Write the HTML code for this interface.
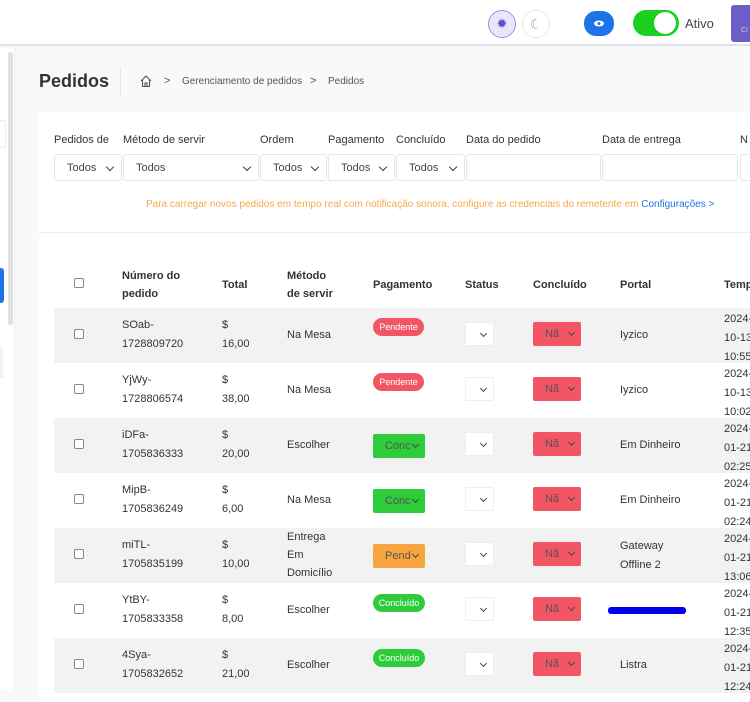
<!DOCTYPE html>
<html><head><meta charset="utf-8"><style>
*{margin:0;padding:0;box-sizing:border-box}
body{width:750px;height:690px;overflow:hidden;background:#f8f9fb;font-family:"Liberation Sans",sans-serif;color:#333;position:relative}
.a{position:absolute}
.top{left:0;top:0;width:750px;height:46px;background:#fff;border-bottom:2px solid #e2e2e4}
.side{left:0;top:48px;width:15px;height:642px;background:#fff;border-right:1px solid #eee}
.card{left:39px;top:112px;width:720px;height:590px;background:#fff}
.lbl{font-size:11px;color:#333;top:134px}
.sel{top:154px;height:27px;border:1px solid #e6e6e6;border-radius:3px;background:#fff;font-size:11px;color:#444;padding:7px 0 0 12px}
.sel:after{content:"";position:absolute;right:8px;top:9px;width:5px;height:5px;border-right:1.5px solid #444;border-bottom:1.5px solid #444;transform:rotate(45deg)}
.box{top:154px;height:27px;border:1px solid #e6e6e6;border-radius:3px;background:#fff}
.th{font-size:11px;font-weight:bold;color:#333;line-height:18px}
.row{left:54px;width:700px;height:55px}
.g{background:#f2f2f2}
.td{font-size:11px;color:#333;line-height:19px}
.dt{font-size:11px;color:#333;line-height:19px}
.cb{width:10px;height:10px;border:1px solid #888;border-radius:2px;background:#fff}
.pill{height:18px;border-radius:9px;color:#fff;font-size:9px;text-align:center;line-height:18px}
.dd{height:24px;border-radius:2px;font-size:11px;padding:6px 0 0 12px}
.dd:after{content:"";position:absolute;right:7px;top:8px;width:4px;height:4px;border-right:1.5px solid #444;border-bottom:1.5px solid #444;transform:rotate(45deg)}
</style></head><body>
<div class="a top"></div>
<div class="a" style="left:488px;top:10px;width:28px;height:28px;border-radius:50%;background:#e8e6f8;border:1px solid #9c94e0;color:#5b50c8;font-size:13px;text-align:center;line-height:26px">✹</div>
<div class="a" style="left:522px;top:10px;width:28px;height:28px;border-radius:50%;border:1px solid #e6e6ee;color:#9a9aa6;font-size:14px;text-align:center;line-height:26px">☾</div>
<div class="a" style="left:584px;top:11px;width:30px;height:25px;border-radius:12px;background:#1c74e8"><svg width="30" height="25"><ellipse cx="15" cy="12.5" rx="5" ry="3" fill="#fff"/><circle cx="15" cy="12.5" r="1.5" fill="#1c74e8"/></svg></div>
<div class="a" style="left:633px;top:10px;width:46px;height:26px;border-radius:13px;background:#1ed01e"><div class="a" style="left:21px;top:2px;width:22px;height:22px;border-radius:50%;background:#fff"></div></div>
<div class="a" style="left:685px;top:16px;font-size:13px;color:#444">Ativo</div>
<div class="a" style="left:731px;top:5px;width:25px;height:37px;background:#6a5fc8;border-radius:3px;color:#ccc;font-size:7px;padding:22px 0 0 10px">CI</div>
<div class="a side"></div>
<div class="a" style="left:8px;top:52px;width:5px;height:273px;background:#e0e0e0;border-radius:3px"></div>
<div class="a" style="left:0;top:268px;width:4px;height:35px;background:#1c74e8;border-radius:0 3px 3px 0"></div>
<div class="a" style="left:0;top:120px;width:6px;height:28px;border:1px solid #eee;border-left:none"></div>
<div class="a" style="left:0;top:348px;width:3px;height:30px;background:#f2f2f2"></div>
<div class="a" style="left:39px;top:71px;font-size:18px;font-weight:bold;color:#333">Pedidos</div>
<div class="a" style="left:120px;top:67px;width:1px;height:30px;background:#e8e8e8"></div>
<svg class="a" style="left:139px;top:74px" width="14" height="14"><path d="M2 7 L7 2 L12 7 M3.5 6 V12.5 H10.5 V6 M6 12.5 V9 H8 V12.5" stroke="#555" fill="none" stroke-width="1.1"/></svg>
<div class="a" style="left:164px;top:75px;font-size:11px;color:#555">&gt;</div>
<div class="a" style="left:182px;top:76px;font-size:10px;color:#555">Gerenciamento de pedidos</div>
<div class="a" style="left:310px;top:75px;font-size:11px;color:#555">&gt;</div>
<div class="a" style="left:328px;top:76px;font-size:10px;color:#555">Pedidos</div>
<div class="a card"></div>
<div class="a lbl" style="left:54px">Pedidos de</div>
<div class="a lbl" style="left:123px">Método de servir</div>
<div class="a lbl" style="left:260px">Ordem</div>
<div class="a lbl" style="left:328px">Pagamento</div>
<div class="a lbl" style="left:396px">Concluído</div>
<div class="a lbl" style="left:466px">Data do pedido</div>
<div class="a lbl" style="left:602px">Data de entrega</div>
<div class="a lbl" style="left:740px">N</div>
<div class="a sel" style="left:54px;width:68px">Todos</div>
<div class="a sel" style="left:123px;width:136px">Todos</div>
<div class="a sel" style="left:260px;width:67px">Todos</div>
<div class="a sel" style="left:328px;width:67px">Todos</div>
<div class="a sel" style="left:396px;width:69px">Todos</div>
<div class="a box" style="left:466px;width:135px"></div>
<div class="a box" style="left:602px;width:136px"></div>
<div class="a box" style="left:740px;width:20px"></div>
<div class="a" style="left:146px;top:199px;font-size:10px;color:#f7a84a;white-space:nowrap">Para carregar novos pedidos em tempo real com notificação sonora, configure as credenciais do remetente em <span style="color:#1c74e8">Configurações &gt;</span></div>
<div class="a" style="left:39px;top:232px;width:711px;height:1px;background:#eee"></div>
<div class="a cb" style="left:74px;top:278px"></div>
<div class="a th" style="left:122px;top:267px">Número do<br>pedido</div>
<div class="a th" style="left:222px;top:276px">Total</div>
<div class="a th" style="left:287px;top:267px">Método<br>de servir</div>
<div class="a th" style="left:373px;top:276px">Pagamento</div>
<div class="a th" style="left:465px;top:276px">Status</div>
<div class="a th" style="left:533px;top:276px">Concluído</div>
<div class="a th" style="left:620px;top:276px">Portal</div>
<div class="a th" style="left:724px;top:276px">Temp</div>
<div class="a row g" style="top:308px"></div>
<div class="a row g" style="top:418px"></div>
<div class="a row g" style="top:528px"></div>
<div class="a row g" style="top:638px"></div>
<div class="a cb" style="left:74px;top:329px"></div><div class="a td" style="left:122px;top:316px">SOab-<br>1728809720</div><div class="a td" style="left:222px;top:316px">$<br>16,00</div><div class="a td" style="left:287px;top:326px">Na Mesa</div><div class="a pill" style="left:373px;top:318px;width:51px;background:#f25563">Pendente</div><div class="a dd" style="left:465px;top:322px;width:29px;background:#fff;border:1px solid #eee"></div><div class="a dd" style="left:533px;top:322px;width:48px;background:#f25563;color:#555">Nã</div><div class="a td" style="left:620px;top:326px">Iyzico</div><div class="a dt" style="left:724px;top:310px">2024-<br>10-13<br>10:55</div>
<div class="a cb" style="left:74px;top:384px"></div><div class="a td" style="left:122px;top:371px">YjWy-<br>1728806574</div><div class="a td" style="left:222px;top:371px">$<br>38,00</div><div class="a td" style="left:287px;top:381px">Na Mesa</div><div class="a pill" style="left:373px;top:373px;width:51px;background:#f25563">Pendente</div><div class="a dd" style="left:465px;top:377px;width:29px;background:#fff;border:1px solid #eee"></div><div class="a dd" style="left:533px;top:377px;width:48px;background:#f25563;color:#555">Nã</div><div class="a td" style="left:620px;top:381px">Iyzico</div><div class="a dt" style="left:724px;top:365px">2024-<br>10-13<br>10:02</div>
<div class="a cb" style="left:74px;top:439px"></div><div class="a td" style="left:122px;top:426px">iDFa-<br>1705836333</div><div class="a td" style="left:222px;top:426px">$<br>20,00</div><div class="a td" style="left:287px;top:436px">Escolher</div><div class="a dd" style="left:373px;top:434px;width:52px;background:#2ecc3a;color:#555">Conc</div><div class="a dd" style="left:465px;top:432px;width:29px;background:#fff;border:1px solid #eee"></div><div class="a dd" style="left:533px;top:432px;width:48px;background:#f25563;color:#555">Nã</div><div class="a td" style="left:620px;top:436px">Em Dinheiro</div><div class="a dt" style="left:724px;top:420px">2024-<br>01-21<br>02:25</div>
<div class="a cb" style="left:74px;top:494px"></div><div class="a td" style="left:122px;top:481px">MipB-<br>1705836249</div><div class="a td" style="left:222px;top:481px">$<br>6,00</div><div class="a td" style="left:287px;top:491px">Na Mesa</div><div class="a dd" style="left:373px;top:489px;width:52px;background:#2ecc3a;color:#555">Conc</div><div class="a dd" style="left:465px;top:487px;width:29px;background:#fff;border:1px solid #eee"></div><div class="a dd" style="left:533px;top:487px;width:48px;background:#f25563;color:#555">Nã</div><div class="a td" style="left:620px;top:491px">Em Dinheiro</div><div class="a dt" style="left:724px;top:475px">2024-<br>01-21<br>02:24</div>
<div class="a cb" style="left:74px;top:549px"></div><div class="a td" style="left:122px;top:536px">miTL-<br>1705835199</div><div class="a td" style="left:222px;top:536px">$<br>10,00</div><div class="a td" style="left:287px;top:528px;line-height:18px">Entrega<br>Em<br>Domicílio</div><div class="a dd" style="left:373px;top:544px;width:52px;background:#f9a53f;color:#555">Pend</div><div class="a dd" style="left:465px;top:542px;width:29px;background:#fff;border:1px solid #eee"></div><div class="a dd" style="left:533px;top:542px;width:48px;background:#f25563;color:#555">Nã</div><div class="a td" style="left:620px;top:537px">Gateway<br>Offline 2</div><div class="a dt" style="left:724px;top:530px">2024-<br>01-21<br>13:06</div>
<div class="a cb" style="left:74px;top:604px"></div><div class="a td" style="left:122px;top:591px">YtBY-<br>1705833358</div><div class="a td" style="left:222px;top:591px">$<br>8,00</div><div class="a td" style="left:287px;top:601px">Escolher</div><div class="a pill" style="left:373px;top:594px;width:52px;background:#2ecc3a">Concluído</div><div class="a dd" style="left:465px;top:597px;width:29px;background:#fff;border:1px solid #eee"></div><div class="a dd" style="left:533px;top:597px;width:48px;background:#f25563;color:#555">Nã</div><div class="a" style="left:608px;top:607px;width:78px;height:7px;background:#0000ee;border-radius:3px"></div><div class="a dt" style="left:724px;top:585px">2024-<br>01-21<br>12:35</div>
<div class="a cb" style="left:74px;top:659px"></div><div class="a td" style="left:122px;top:646px">4Sya-<br>1705832652</div><div class="a td" style="left:222px;top:646px">$<br>21,00</div><div class="a td" style="left:287px;top:656px">Escolher</div><div class="a pill" style="left:373px;top:649px;width:52px;background:#2ecc3a">Concluído</div><div class="a dd" style="left:465px;top:652px;width:29px;background:#fff;border:1px solid #eee"></div><div class="a dd" style="left:533px;top:652px;width:48px;background:#f25563;color:#555">Nã</div><div class="a td" style="left:620px;top:656px">Listra</div><div class="a dt" style="left:724px;top:640px">2024-<br>01-21<br>12:24</div>
</body></html>
